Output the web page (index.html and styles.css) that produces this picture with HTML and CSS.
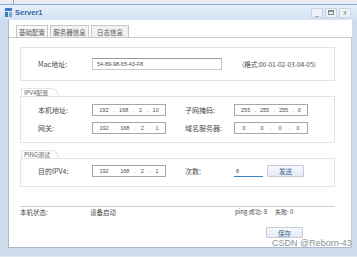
FILE: index.html
```html
<!DOCTYPE html>
<html>
<head>
<meta charset="utf-8">
<link rel="stylesheet" href="styles.css">
</head>
<body>
<div class="topstrip"><span class="mark"></span></div>
<div class="win">
  <div class="titlebar">
    <svg class="ticon" width="7" height="9" viewBox="0 0 7 9">
      <rect x="0" y="0" width="7" height="3" fill="#3d7cc9"/>
      <rect x="0" y="4" width="3" height="5" fill="#3d7cc9"/>
      <rect x="4" y="4" width="3" height="5" fill="#7aa9dd"/>
    </svg>
    <span class="ttext">Server1</span>
    <div class="wbtns">
      <span class="wbtn">_</span>
      <span class="wbtn"><span class="maxbox"></span></span>
      <span class="wbtn">x</span>
    </div>
  </div>
  <div class="client">
    <div class="tabs">
      <span class="tab active">基础配置</span>
      <span class="tab">服务器信息</span>
      <span class="tab">日志信息</span>
    </div>
    <div class="panel">
      <div class="box macbox">
        <span class="lbl">Mac地址:</span>
        <span class="macinput">54-89-98-65-43-F8</span>
        <span class="hint">(格式:00-01-02-03-04-05)</span>
      </div>
      <div class="legend">IPV4配置</div>
      <div class="box ipbox">
        <div class="row">
          <span class="lbl">本机地址:</span>
          <span class="ip"><i>192</i><b>.</b><i>168</i><b>.</b><i>2</i><b>.</b><i>10</i></span>
          <span class="lbl lbl2">子网掩码:</span>
          <span class="ip"><i>255</i><b>.</b><i>255</i><b>.</b><i>255</i><b>.</b><i>0</i></span>
        </div>
        <div class="row">
          <span class="lbl">网关:</span>
          <span class="ip"><i>192</i><b>.</b><i>168</i><b>.</b><i>2</i><b>.</b><i>1</i></span>
          <span class="lbl lbl2">域名服务器:</span>
          <span class="ip"><i>0</i><b>.</b><i>0</i><b>.</b><i>0</i><b>.</b><i>0</i></span>
        </div>
      </div>
      <div class="legend">PING测试</div>
      <div class="box pingbox">
        <div class="row">
          <span class="lbl">目的IPV4:</span>
          <span class="ip"><i>192</i><b>.</b><i>168</i><b>.</b><i>2</i><b>.</b><i>1</i></span>
          <span class="lbl lbl2">次数:</span>
          <span class="count">8</span>
          <span class="btn">发送</span>
        </div>
      </div>
      <div class="status">
        <span class="st1">本机状态:</span>
        <span class="st2">设备启动</span>
        <span class="st3">ping 成功: 8</span>
        <span class="st4">失败: 0</span>
      </div>
      <div class="saverow"><span class="btn savebtn">保存</span></div>
    </div>
  </div>
  <div class="watermark">CSDN @Reborn-43</div>
</div>
</body>
</html>
```
FILE: styles.css
```css
* { box-sizing: border-box; }
html, body { margin: 0; padding: 0; }
body {
  width: 357px; height: 257px; overflow: hidden;
  background: #dfe7f0;
  font-family: "Noto Sans CJK SC", "Liberation Sans", sans-serif;
  font-size: 7px; color: #4a4a4a;
  position: relative;
}
.topstrip { height: 4px; background: #e9edf2; position: relative; }
.mark { position: absolute; left: 13px; top: 0; width: 1px; height: 4px; background: #9aa6b3; }
.win { border-top: 1px solid #8eaed3; background: #cddbea; height: 252px; }
.titlebar {
  height: 15px; display: flex; align-items: center;
  background: linear-gradient(#e7f0fa, #d3e2f2);
  padding-left: 5px;
}
.ticon { margin-right: 3px; }
.ttext { color: #3567aa; font-weight: bold; font-size: 7.5px; font-family: "Liberation Sans", sans-serif; }
.wbtns { margin-left: auto; display: flex; gap: 2px; margin-right: 6px; }
.wbtn {
  width: 12px; height: 10px; border: 1px solid #c5d3e2; background: #eef3f9;
  font-size: 7px; color: #777; display: flex; align-items: center; justify-content: center;
  line-height: 1; font-family: "Liberation Sans", sans-serif;
}
.maxbox { width: 6px; height: 5px; border: 1px solid #888; border-top-width: 2px; }
.client {
  margin-left: 8px; margin-right: 5px; height: 228px;
  background: #fff; border-left: 1px solid #a9b8c8; border-bottom: 1px solid #a9b8c8;
  padding-top: 5px;
}
.tabs { display: flex; gap: 2px; padding-left: 7px; height: 12px; }
.tab {
  width: 32px; height: 12px; border: 1px solid #c7c7c7; border-bottom: none;
  background: #f2f2f2; color: #555; display: flex; align-items: center; justify-content: center;
  font-size: 6.5px;
}
.tab:nth-child(2) { width: 39px; }
.tab:nth-child(3) { width: 38px; }
.tab.active { background: #f7f7f7; }
.panel {
  border-top: 1px solid #c9c9c9; border-right: 1px solid #c9c9c9;
  height: 210px; padding: 9px 17px 0 11px;
}
.box { border: 1px solid #e4e4e4; width: 315px; }
.macbox { height: 34px; display: flex; align-items: center; padding-left: 17px; }
.lbl { width: 54px; }
.macinput {
  width: 130px; height: 12px; border: 1px solid #c8c8c8; border-top-color: #9a9a9a;
  padding-left: 4px; display: flex; align-items: center; font-size: 5.5px; font-family: "Liberation Sans", sans-serif;
}
.hint { margin-left: 20px; font-size: 6.5px; }
.legend {
  margin-top: 7px; width: 38px; height: 8px; border: 1px solid #e4e4e4; border-bottom: none;
  border-top-right-radius: 8px; color: #666; font-size: 6px; line-height: 8px; padding-left: 2px;
  margin-left: 1px;
}
.ipbox { height: 47px; padding: 7px 0 0 17px; display: flex; flex-direction: column; gap: 6px; }
.pingbox { height: 29px; padding: 6px 0 0 17px; }
.row { display: flex; align-items: center; height: 12px; }
.lbl2 { width: 49px; margin-left: 19px; }
.ip {
  width: 74px; height: 12px; border: 1px solid #a7a7a7; display: flex; align-items: center;
  justify-content: space-around; padding: 0 4px; font-size: 5.5px; font-family: "Liberation Sans", sans-serif;
}
.ip i, .ip b { font-style: normal; font-weight: normal; }
.count {
  width: 29px; height: 12px; border-bottom: 1px solid #3d7fd0; font-size: 5.5px;
  display: flex; align-items: center; padding-left: 2px; font-family: "Liberation Sans", sans-serif;
  background: #fff;
}
.btn {
  width: 37px; height: 12px; border: 1px solid #c3ccd6; border-radius: 1px;
  background: linear-gradient(#f6f9fc, #e3eaf2); color: #3a5f8d; display: flex;
  align-items: center; justify-content: center; font-size: 6.5px;
}
.pingbox .btn { margin-left: 4px; }
.status {
  margin-top: 19px; width: 315px; border-top: 1px solid #cfcfcf;
  display: flex; height: 10px; align-items: center; font-size: 6.5px;
}
.st1 { width: 70px; }
.st2 { width: 145px; }
.st3 { width: 40px; font-size: 6px; }
.st4 { font-size: 6px; }
.saverow { display: flex; justify-content: flex-end; width: 283px; margin-top: 11px; }
.savebtn { height: 11px; }
.watermark {
  position: absolute; left: 272px; top: 238px; font-size: 9px; color: #8a8f96;
  font-family: "Liberation Sans", sans-serif; white-space: nowrap;
  text-shadow: 0 0 1px #fff;
}
```
